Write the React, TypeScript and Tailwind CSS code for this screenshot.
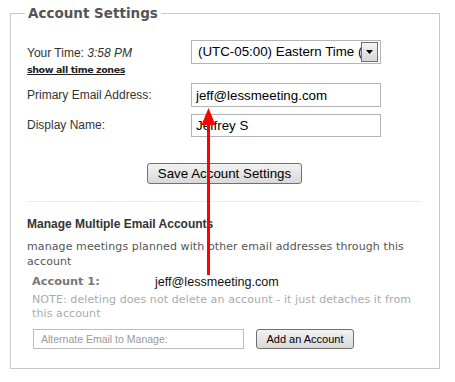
import React from "react";

const arial = { fontFamily: '"Liberation Sans", Arial, sans-serif' };
const verdana = { fontFamily: '"DejaVu Sans", Verdana, sans-serif' };

export default function App() {
  return (
    <div className="relative w-[455px] h-[382px] bg-white overflow-hidden" style={arial}>
      <fieldset className="ml-[10px] mt-[4px] w-[430px] border border-[#c8c8c8]">
        <legend
          className="ml-[14px] px-[3px] text-[13.5px] leading-[18px] font-bold text-[#555]"
          style={verdana}
        >
          Account Settings
        </legend>
        <div className="pl-[16px] pr-[17px] pt-[18px] pb-[19px]">
          {/* Row 1 */}
          <div className="flex">
            <div className="w-[164px]">
              <div className="pt-[6px] text-[12px] leading-[15px] text-[#333]">
                Your Time: <i>3:58 PM</i>
              </div>
              <a
                className="block mt-[2px] text-[9.5px] tracking-[-0.4px] leading-[13px] font-bold text-[#222] underline"
                style={verdana}
              >
                show all time zones
              </a>
            </div>
            <div className="relative w-[190px] h-[24px] border border-[#b4b4b4] bg-white overflow-hidden">
              <div className="w-[170px] overflow-hidden pl-[6px] text-[13.33px] leading-[22px] text-black whitespace-nowrap">
                (UTC-05:00) Eastern Time (US &amp; Canada)
              </div>
              <div className="absolute right-[2px] top-[1px] w-[17px] h-[20px] border border-[#707070] bg-gradient-to-b from-[#f4f4f4] to-[#d6d6d6] flex items-center justify-center">
                <svg width="7" height="4" viewBox="0 0 7 4">
                  <polygon points="0,0 7,0 3.5,4" fill="#000" />
                </svg>
              </div>
            </div>
          </div>
          {/* Row 2 */}
          <div className="flex items-center mt-[7px]">
            <div className="w-[164px] text-[12px] leading-[15px] text-[#333]">Primary Email Address:</div>
            <input
              readOnly
              value="jeff@lessmeeting.com"
              className="w-[190px] h-[24px] border border-[#b4b4b4] pl-[4px] text-[13.33px] text-black outline-none"
              style={arial}
            />
          </div>
          {/* Row 3 */}
          <div className="flex items-center mt-[7px]">
            <div className="w-[164px] text-[12px] leading-[15px] text-[#333]">Display Name:</div>
            <input
              readOnly
              value="Jeffrey S"
              className="w-[190px] h-[23px] border border-[#b4b4b4] pl-[4px] text-[13.33px] text-black outline-none"
              style={arial}
            />
          </div>
          <div className="flex justify-center mt-[26px]">
            <button
              className="w-[155px] h-[21px] border border-[#707070] rounded-[3px] bg-gradient-to-b from-[#f2f2f2] to-[#d9d9d9] text-[13.33px] leading-[19px] text-black"
              style={arial}
            >
              Save Account Settings
            </button>
          </div>
          <div className="mt-[17px] h-px bg-[#ececec]" />
          <div className="mt-[14px] text-[12px] leading-[16px] font-bold text-[#333]">
            Manage Multiple Email Accounts
          </div>
          <p className="mt-[7px] text-[11px] tracking-[0.1px] leading-[15px] text-[#555]" style={verdana}>
            manage meetings planned with other email addresses through this account
          </p>
          <div className="pl-[5px]">
            <div className="flex mt-[5px] leading-[16px]">
              <div className="w-[123px] text-[11.3px] font-bold text-[#777]" style={verdana}>
                Account 1:
              </div>
              <div className="text-[12.6px] text-[#111]">jeff@lessmeeting.com</div>
            </div>
            <p className="mt-[3px] text-[11px] tracking-[0.1px] leading-[14px] text-[#aaa]" style={verdana}>
              NOTE: deleting does not delete an account - it just detaches it from this account
            </p>
            <div className="flex items-center mt-[8px] ml-[1px]">
              <input
                placeholder="Alternate Email to Manage:"
                className="w-[211px] h-[20px] border border-[#bcbcbc] pl-[7px] text-[10.5px] text-black placeholder:text-[#999] outline-none"
                style={arial}
              />
              <button
                className="ml-[12px] w-[98px] h-[20px] border border-[#707070] rounded-[3px] bg-gradient-to-b from-[#f2f2f2] to-[#d9d9d9] text-[11px] leading-[18px] text-black"
                style={arial}
              >
                Add an Account
              </button>
            </div>
          </div>
        </div>
      </fieldset>
      {/* red annotation arrow */}
      <svg
        className="absolute left-[200px] top-[107px]"
        width="18"
        height="169"
        viewBox="0 0 18 169"
      >
        <polygon points="8.5,1 1.5,18 15.5,18" fill="#ff0000" />
        <rect x="7" y="17" width="3" height="151" fill="#ff0000" />
      </svg>
    </div>
  );
}
